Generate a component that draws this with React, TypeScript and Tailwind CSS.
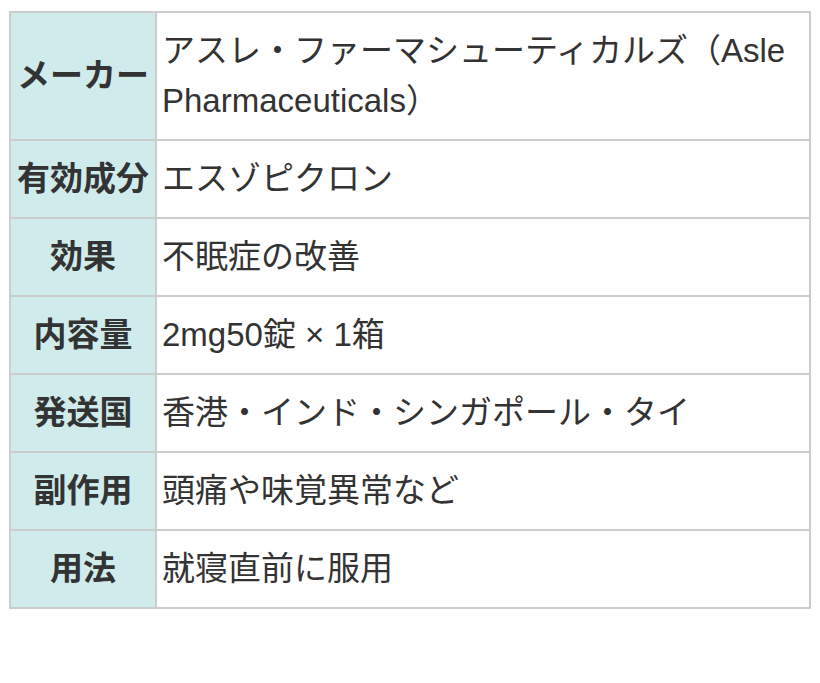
import React from 'react';

const rows: { label: string; value: string }[] = [
  { label: 'メーカー', value: 'アスレ・ファーマシューティカルズ（Asle Pharmaceuticals）' },
  { label: '有効成分', value: 'エスゾピクロン' },
  { label: '効果', value: '不眠症の改善' },
  { label: '内容量', value: '2mg50錠 × 1箱' },
  { label: '発送国', value: '香港・インド・シンガポール・タイ' },
  { label: '副作用', value: '頭痛や味覚異常など' },
  { label: '用法', value: '就寝直前に服用' },
];

const App: React.FC = () => {
  return (
    <div className="w-[820px] h-[683px] bg-white pt-[11px] pl-[9px] font-['Liberation_Sans','Noto_Sans_CJK_JP',sans-serif]">
      <table className="w-[802px] border-collapse border-2 border-[#cccccc] text-[33px] leading-[50px] text-[#333333]">
        <tbody>
          {rows.map((r) => (
            <tr key={r.label}>
              <th className="w-[146px] border-2 border-[#cccccc] bg-[#cfebeb] px-0 py-[13px] text-center font-bold whitespace-nowrap">
                {r.label}
              </th>
              <td className="border-2 border-[#cccccc] pl-[5px] pr-2 py-[13px] text-left font-normal">
                {r.value}
              </td>
            </tr>
          ))}
        </tbody>
      </table>
    </div>
  );
};

export default App;
